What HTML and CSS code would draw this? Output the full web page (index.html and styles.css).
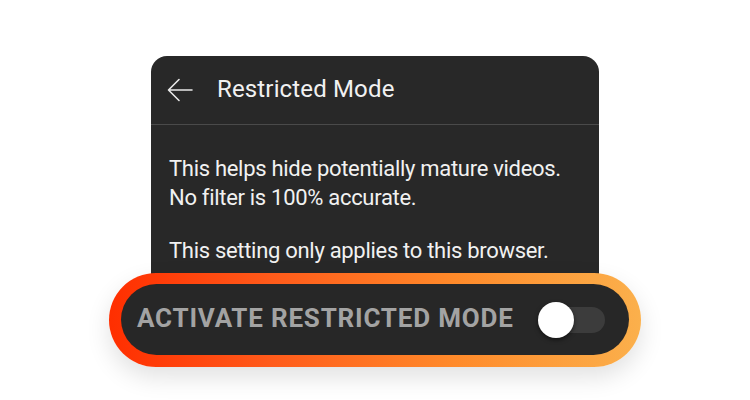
FILE: index.html
```html
<!DOCTYPE html>
<html>
<head>
<meta charset="utf-8">
<link rel="stylesheet" href="styles.css">
</head>
<body>
<div class="stage">
  <div class="card">
    <div class="card-header">
      <svg class="back" width="26" height="24" viewBox="0 0 26 24" fill="none" stroke="#e8e8e8" stroke-width="1.6" stroke-linecap="round" stroke-linejoin="round">
        <path d="M25 12H2M12 1.5L1.5 12L12 22.5"/>
      </svg>
      <span class="title">Restricted Mode</span>
    </div>
    <div class="card-body">
      <p>This helps hide potentially mature videos.<br>No filter is 100% accurate.</p>
      <p>This setting only applies to this browser.</p>
    </div>
  </div>
  <div class="pill">
    <div class="pill-inner">
      <span class="pill-label">ACTIVATE RESTRICTED MODE</span>
      <span class="toggle"><span class="knob"></span></span>
    </div>
  </div>
</div>
</body>
</html>
```

FILE: styles.css
```css
html, body {
  margin: 0;
  padding: 0;
  background: #ffffff;
}
body {
  width: 750px;
  height: 400px;
  overflow: hidden;
  font-family: Roboto, "Liberation Sans", sans-serif;
}
.stage {
  display: flex;
  flex-direction: column;
  align-items: center;
  padding-top: 56px;
}
.card {
  width: 448px;
  height: 229px;
  background: #282828;
  border-radius: 16px 16px 0 0;
  box-sizing: border-box;
}
.card-header {
  height: 69px;
  display: flex;
  align-items: center;
  padding-left: 16px;
  border-bottom: 1px solid #4a4a4a;
  box-sizing: border-box;
  gap: 24px;
}
.back {
  display: block;
  margin-top: -1px;
}
.title {
  color: #f1f1f1;
  font-size: 24px;
  font-weight: 400;
  letter-spacing: 0.15px;
  margin-top: -2px;
}
.card-body {
  padding: 29px 18px 0 18px;
  color: #f1f1f1;
  font-size: 22px;
  line-height: 29px;
  letter-spacing: -0.3px;
}
.card-body p {
  margin: 0 0 24px 0;
}
.pill {
  position: relative;
  margin-top: -12px;
  width: 532px;
  height: 94px;
  border-radius: 47px;
  padding: 11px 12px 12px 12px;
  box-sizing: border-box;
  background: linear-gradient(90deg, #ff2e00 0%, #ff5a1a 30%, #ff8a2a 65%, #fbb04c 100%);
  box-shadow: 0 10px 24px rgba(0, 0, 0, 0.12);
}
.pill-inner {
  height: 100%;
  border-radius: 36px;
  background: #272727;
  display: flex;
  align-items: center;
  padding-left: 16px;
  padding-right: 24px;
  box-sizing: border-box;
  justify-content: space-between;
}
.pill-label {
  color: #a3a3a3;
  font-size: 26px;
  font-weight: 700;
  letter-spacing: 0.8px;
  margin-top: -3px;
}
.toggle {
  width: 60px;
  height: 26px;
  border-radius: 13px;
  background: #3c3c3c;
  display: flex;
  align-items: center;
}
.knob {
  width: 36px;
  height: 36px;
  border-radius: 50%;
  background: #ffffff;
  margin-left: -7px;
  box-shadow: 0 2px 4px rgba(0, 0, 0, 0.5);
}
```
